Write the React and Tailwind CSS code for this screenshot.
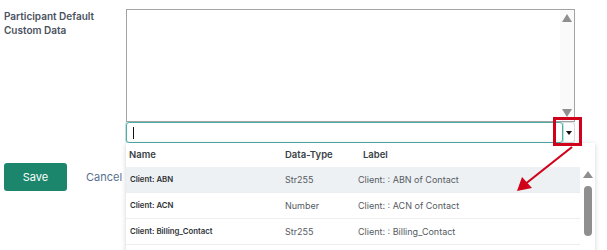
import React from "react";

const rows = [
  { name: "Client: ABN", type: "Str255", label: "Client: : ABN of Contact", active: true },
  { name: "Client: ACN", type: "Number", label: "Client: : ACN of Contact" },
  { name: "Client: Billing_Contact", type: "Str255", label: "Client: : Billing_Contact" },
];

export default function App() {
  return (
    <div
      className="relative w-[607px] h-[250px] overflow-hidden bg-white"
      style={{ fontFamily: "Inter, 'Liberation Sans', sans-serif" }}
    >
      <div className="flex pt-[9px]">
        <div className="w-[126px] pl-[4px]">
          <div className="text-[10px] leading-[14px] font-semibold text-[#4a5260]">
            Participant Default
            <br />
            Custom Data
          </div>
        </div>
        <div className="flex flex-col">
          <div className="relative w-[449px] h-[113px] border border-[#a3a3a3] bg-white">
            <div className="absolute right-0 top-0 bottom-0 w-[14px] bg-[#fafafa] flex flex-col items-center justify-between py-[4px]">
              <div className="w-0 h-0 border-l-[5px] border-r-[5px] border-b-[8px] border-l-transparent border-r-transparent border-b-[#8f8f8f]" />
              <div className="w-0 h-0 border-l-[5px] border-r-[5px] border-t-[8px] border-l-transparent border-r-transparent border-t-[#8f8f8f]" />
            </div>
          </div>
          <div className="flex">
            <div className="w-[437px] h-[21px] border border-[#4faca7] rounded-[3px] shadow-[0_0_0_1px_rgba(79,172,167,0.35)] flex items-center pl-[6px]">
              <div className="w-px h-[12px] bg-[#111]" />
            </div>
            <div className="w-[12px] h-[21px] border border-l-0 border-[#d8dcdf] rounded-r-[3px] flex items-center justify-center">
              <div className="w-0 h-0 border-l-[3px] border-r-[3px] border-t-[4px] border-l-transparent border-r-transparent border-t-[#111]" />
            </div>
          </div>
        </div>
      </div>

      <div className="flex items-center mt-[20px] pl-[4px]">
        <button className="w-[63px] h-[28px] rounded-[3px] bg-[#1c866d] text-white text-[11px]">
          Save
        </button>
        <span className="ml-[19px] text-[11px] text-[#56708f]">Cancel</span>
      </div>

      {/* dropdown menu */}
      <div className="absolute left-[126px] top-[143px] w-[469px] h-[130px] bg-white shadow-[0_1px_5px_rgba(0,0,0,0.18)] flex overflow-hidden">
        <div className="flex-1 flex flex-col">
          <div className="h-[24px] shrink-0 flex items-center text-[9.5px] font-semibold text-[#3a3f45]">
            <span className="w-[159px] pl-[3px]">Name</span>
            <span className="w-[78px]">Data-Type</span>
            <span>Label</span>
          </div>
          {rows.map((r) => (
            <div
              key={r.name}
              className={`h-[26px] shrink-0 flex items-center border-b border-[#eceff1] ${r.active ? "bg-[#eef1f4]" : "bg-white"}`}
            >
              <span className="w-[159px] pl-[4px] text-[7.8px] font-semibold text-[#2f3338]">{r.name}</span>
              <span className="w-[73px] text-[9px] text-[#555b62]">{r.type}</span>
              <span className="text-[9px] text-[#555b62]">{r.label}</span>
            </div>
          ))}
        </div>
        <div className="w-[15px] shrink-0 flex flex-col items-center pt-[28px]">
          <div className="w-0 h-0 border-l-[5px] border-r-[5px] border-b-[7px] border-l-transparent border-r-transparent border-b-[#8f8f8f]" />
          <div className="mt-[8px] w-[8px] h-[50px] rounded-full bg-[#8f8f8f]" />
        </div>
      </div>

      {/* annotation */}
      <div className="absolute left-[553px] top-[117px] w-[29px] h-[29px] border-[3px] border-[#d0021b]" />
      <svg className="absolute left-0 top-0" width="607" height="250">
        <line x1="572" y1="147" x2="524" y2="185" stroke="#d0021b" strokeWidth="2.2" />
        <polygon points="517,191 522,177 532,188" fill="#d0021b" />
      </svg>
    </div>
  );
}
